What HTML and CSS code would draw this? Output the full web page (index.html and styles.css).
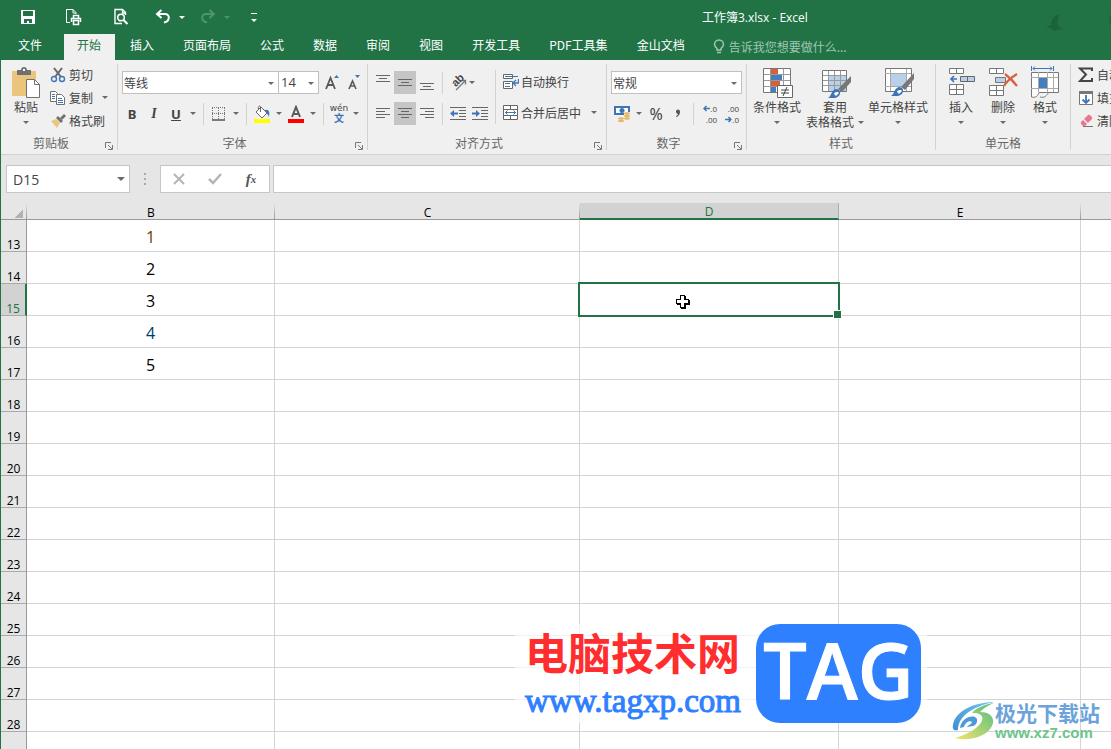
FILE: index.html
```
<!DOCTYPE html>
<html lang="zh-CN">
<head>
    <meta charset="UTF-8">
    <meta name="viewport" content="width=device-width, initial-scale=1.0">
    <title>工作簿3.xlsx - Excel</title>
    <link rel="stylesheet" href="styles.css">
</head>
<body>
    <header class="titlebar">
        <div class="quick">
            <button class="quick-btn" aria-label="保存"><svg width="16" height="16" viewBox="0 0 16 16"><path d="M1 1h14v14H1z" fill="#fff"/><path d="M3 2h10v5H3zM4 10h8v4H9v-2H7v2H4z" fill="#217346"/></svg></button>
            <button class="quick-btn print" aria-label="快速打印"><svg width="18" height="18" viewBox="0 0 18 18" fill="none" stroke="#fff"><path d="M5 14.500H1.500V1.500H8l3 3V6M8 1.500V5h3"/><path d="M8.500 10V7.500h5V10M6.500 14V10.500h9V14M8.500 12.500h5v4h-5z" stroke-width="1.500"/></svg></button>
            <button class="quick-btn preview" aria-label="打印预览"><svg width="16" height="18" viewBox="0 0 16 18" fill="none" stroke="#fff"><path d="M12.500 7V4.500l-3-3H2v14h7M9.500 1.500V5h3" stroke-width="1.400"/><circle cx="8" cy="9.500" r="3.300" stroke-width="1.600"/><path d="M10.500 12l4 4" stroke-width="2.200"/></svg></button>
            <button class="quick-btn undo" aria-label="撤消"><svg width="16" height="16" viewBox="0 0 16 16" fill="none" stroke="#fff" stroke-width="2"><path d="M6.500 1L2 5l4.500 4M2.500 5H10c5 0 5.500 7-1 8.500"/></svg></button>
            <span class="caret white"></span>
            <button class="quick-btn redo" aria-label="恢复" disabled><svg width="16" height="16" viewBox="0 0 16 16" fill="none" stroke="#4f9470" stroke-width="2"><path d="M9.500 1L14 5l-4.500 4M13.500 5H6c-5 0-5.500 7 1 8.500"/></svg></button>
            <span class="caret faded"></span>
            <button class="quick-btn custom" aria-label="自定义快速访问工具栏"><span class="caret white"></span></button>
        </div>
        <h1>工作簿3.xlsx - Excel</h1>
        <svg class="bird" width="66" height="20" viewBox="0 0 66 20" fill="#1b633a"><path d="M14 1C8 3 6 8 6 12L1 14l4 1 4 3 4-1 5-1-5-3c-1-4 0-8 1-12z"/><path d="M63 1l3 3v6l-2 3 1-6z"/></svg>
    </header>

    <nav class="tabs">
        <a class="file" href="#">文件</a>
        <a class="active" href="#">开始</a>
        <a href="#">插入</a>
        <a href="#">页面布局</a>
        <a href="#">公式</a>
        <a href="#">数据</a>
        <a href="#">审阅</a>
        <a href="#">视图</a>
        <a href="#">开发工具</a>
        <a href="#">PDF工具集</a>
        <a href="#">金山文档</a>
        <a class="tell" href="#"><svg width="12" height="16" viewBox="0 0 12 16" fill="none" stroke="#a0c6b1" stroke-width="1.500"><path d="M4 11V9.500C2.500 8 1.500 7 1.500 5.500a4.500 4.500 0 0 1 9 0C10.500 7 9.500 8 8 9.500V11zM4 13.500h4"/></svg>告诉我您想要做什么...</a>
    </nav>

    <main class="workbook">
        <section class="ribbon">
            <div class="group">
                <div class="body clip-body">
                    <button class="big paste">
                        <svg width="30" height="32" viewBox="0 0 30 32"><path d="M1 5h24v25H1z" fill="#ecc57c"/><path d="M6 4h4c0-4 6-4 6 0h4v5H6z" fill="#707070"/><path d="M12 3h2v2h-2z" fill="#fff"/><path d="M15.500 13.500h8l5 5v13h-13z" fill="#fff" stroke="#707070"/><path d="M23.500 13.500v5h5" fill="none" stroke="#707070"/></svg>
                        <span>粘贴</span><i class="caret"></i>
                    </button>
                    <div class="stack">
                        <button class="text-tool"><svg width="16" height="16" viewBox="0 0 16 16" fill="none"><path d="M4 1l7 9M12 1L5 10" stroke="#666" stroke-width="2"/><circle cx="4" cy="12" r="2.500" stroke="#3e76b5" stroke-width="1.400"/><circle cx="12" cy="12" r="2.500" stroke="#3e76b5" stroke-width="1.400"/></svg>剪切</button>
                        <button class="text-tool"><svg width="16" height="16" viewBox="0 0 16 16" fill="#fff" stroke="#707070"><path d="M.5 1.500h5l2 2v8h-7z"/><path d="M6.500 4.500h5l3 3v7h-8z"/><path d="M2 4.500h3M2 6.500h3M2 8.500h3M8 8.500h4M8 10.500h5M8 12.500h5" stroke="#3e76b5"/></svg>复制<i class="caret after"></i></button>
                        <button class="text-tool"><svg width="16" height="16" viewBox="0 0 16 16"><path d="M1 8l5-2 4 4-3 5z" fill="#ecc57c"/><path d="M6 5l2-2 5 5-2 2z" fill="#707070"/><path d="M10 5l4-4 2 2-4 4z" fill="#707070"/></svg>格式刷</button>
                    </div>
                </div>
                <h2>剪贴板</h2>
                <button class="launcher" aria-label="剪贴板设置"><svg width="8" height="8" viewBox="0 0 8 8" fill="none" stroke="#777"><path d="M.5 6V.5H6M3 3l4 4M7.500 3v4.500H3"/></svg></button>
            </div>

            <div class="group">
                <div class="body rows font-rows">
                    <div class="row">
                        <span class="combo font-name"><select aria-label="字体"><option>等线</option></select></span>
                        <span class="combo font-size"><select aria-label="字号"><option>14</option></select></span>
                        <button class="tool" aria-label="增大字号"><svg width="16" height="18" viewBox="0 0 16 18"><path d="M2 15L6.500 4 11 15M3.500 11h6" fill="none" stroke="#595959" stroke-width="1.800"/><path d="M10 4l2.500-3L15 4z" fill="#3e76b5"/></svg></button>
                        <button class="tool" aria-label="减小字号"><svg width="16" height="18" viewBox="0 0 16 18"><path d="M3 15l3.500-8 3.500 8M4 12h5" fill="none" stroke="#595959" stroke-width="1.600"/><path d="M9 1h5l-2.500 3z" fill="#3e76b5"/></svg></button>
                    </div>
                    <div class="row">
                        <button class="tool bold">B</button>
                        <button class="tool italic">I</button>
                        <button class="tool under">U</button>
                        <button class="drop" aria-label="下划线"><i class="caret"></i></button>
                        <span class="sep"></span>
                        <button class="tool" aria-label="边框"><svg width="16" height="16" viewBox="0 0 16 16" fill="none" stroke="#777"><path d="M1 1.500h13M1 7.500h13M1.500 2v11M7.500 2v11M13.500 2v11" stroke-dasharray="1 1"/><path d="M1 14h13" stroke="#555" stroke-width="1.500"/></svg></button>
                        <button class="drop" aria-label="边框选项"><i class="caret"></i></button>
                        <span class="sep"></span>
                        <button class="tool" aria-label="填充颜色"><svg width="18" height="18" viewBox="0 0 18 18"><path d="M3 7l5-5 6 6-5 5z" fill="#fff" stroke="#666"/><path d="M7.500 7V2c0-2-3-1-2 2" fill="none" stroke="#666"/><path d="M12 5c4-1 5 2 4 7-1-3-2-3-3-4z" fill="#3e76b5"/><path d="M1 14h16v4H1z" fill="#ff0"/></svg></button>
                        <button class="drop" aria-label="填充颜色选项"><i class="caret"></i></button>
                        <button class="tool" aria-label="字体颜色"><svg width="18" height="18" viewBox="0 0 18 18"><path d="M5 12l4-10 4 10M6.500 9h5" fill="none" stroke="#595959" stroke-width="2"/><path d="M1 14h16v4H1z" fill="red"/></svg></button>
                        <button class="drop" aria-label="字体颜色选项"><i class="caret"></i></button>
                        <span class="sep"></span>
                        <button class="tool phonetic" aria-label="拼音"><span>wén</span><b>文</b></button>
                        <button class="drop" aria-label="拼音选项"><i class="caret"></i></button>
                    </div>
                </div>
                <h2>字体</h2>
                <button class="launcher" aria-label="字体设置"><svg width="8" height="8" viewBox="0 0 8 8" fill="none" stroke="#777"><path d="M.5 6V.5H6M3 3l4 4M7.500 3v4.500H3"/></svg></button>
            </div>

            <div class="group">
                <div class="body align-body">
                    <div class="rows">
                        <div class="row">
                            <button class="tool" aria-label="顶端对齐"><svg width="14" height="18" viewBox="0 0 14 18" stroke="#666"><path d="M0 1.500h14M3 4.500h8M0 7.500h14"/></svg></button>
                            <button class="tool on" aria-label="垂直居中"><svg width="14" height="18" viewBox="0 0 14 18" stroke="#666"><path d="M0 5.500h14M3 8.500h8M0 11.500h14"/></svg></button>
                            <button class="tool" aria-label="底端对齐"><svg width="14" height="18" viewBox="0 0 14 18" stroke="#666"><path d="M0 9.500h14M3 12.500h8M0 15.500h14"/></svg></button>
                            <span class="sep"></span>
                            <button class="tool orient" aria-label="方向"><span>ab</span><svg width="18" height="18" viewBox="0 0 18 18" fill="none" stroke="#777" stroke-width="1.300"><path d="M7 16L16 7M12.500 6.500h4v4"/></svg></button>
                            <button class="drop tight" aria-label="方向选项"><i class="caret"></i></button>
                        </div>
                        <div class="row">
                            <button class="tool" aria-label="左对齐"><svg width="14" height="14" viewBox="0 0 14 14" stroke="#666"><path d="M0 1.500h14M0 4.500h9M0 7.500h14M0 10.500h9"/></svg></button>
                            <button class="tool on" aria-label="居中"><svg width="14" height="14" viewBox="0 0 14 14" stroke="#666"><path d="M0 1.500h14M3 4.500h8M0 7.500h14M3 10.500h8"/></svg></button>
                            <button class="tool" aria-label="右对齐"><svg width="14" height="14" viewBox="0 0 14 14" stroke="#666"><path d="M0 1.500h14M5 4.500h9M0 7.500h14M5 10.500h9"/></svg></button>
                            <span class="sep"></span>
                            <button class="tool" aria-label="减少缩进"><svg width="16" height="14" viewBox="0 0 16 14"><path d="M0 .5h16M9 3.500h7M9 6.500h7M9 9.500h7M0 12.500h16" stroke="#666"/><path d="M0 6.500L4 3v2.500h4v2H4V10z" fill="#3e76b5"/></svg></button>
                            <button class="tool" aria-label="增加缩进"><svg width="16" height="14" viewBox="0 0 16 14"><path d="M0 .5h16M9 3.500h7M9 6.500h7M9 9.500h7M0 12.500h16" stroke="#666"/><path d="M8 6.500L4 3v2.500H0v2h4V10z" fill="#3e76b5"/></svg></button>
                        </div>
                    </div>
                    <span class="sep long"></span>
                    <div class="rows">
                        <button class="text-tool wrap"><svg width="16" height="16" viewBox="0 0 16 16" fill="#fff" stroke="#666"><path d="M.5.5h9v4h-9zM.5 7.500h9v7h-9z"/><path d="M2 2.500h13M2 9.500h5M2 12.500h5" stroke="#3e76b5"/><path d="M15.500 5v4h-5M13 6l-3 3 3 3" fill="none" stroke="#3e76b5" stroke-width="1.300"/></svg>自动换行</button>
                        <button class="text-tool wrap"><svg width="16" height="16" viewBox="0 0 16 16" fill="#fff" stroke="#666"><path d="M.5.5h14v14H.5zM.5 4.500h14M.5 10.500h14M7.500.5v4M7.500 10.500v4"/><path d="M2 7.500h11M4.500 5.500l-2 2 2 2M10.500 5.500l2 2-2 2" fill="none" stroke="#3e76b5"/></svg>合并后居中<i class="caret after"></i></button>
                    </div>
                </div>
                <h2>对齐方式</h2>
                <button class="launcher" aria-label="对齐设置"><svg width="8" height="8" viewBox="0 0 8 8" fill="none" stroke="#777"><path d="M.5 6V.5H6M3 3l4 4M7.500 3v4.500H3"/></svg></button>
            </div>

            <div class="group">
                <div class="body rows number-rows">
                    <div class="row">
                        <span class="combo number-format"><select aria-label="数字格式"><option>常规</option></select></span>
                    </div>
                    <div class="row">
                        <button class="tool" aria-label="会计数字格式"><svg width="18" height="18" viewBox="0 0 18 18"><path d="M1 1h16v9H1z" fill="#3e76b5"/><path d="M3 3h12v5H3z" fill="#fff"/><circle cx="9" cy="5.500" r="2.500" fill="#3e76b5"/><path d="M11 7h6v8h-6zM5 11h6v6H5z" fill="#f0f0f0"/><g fill="#e8b765"><ellipse cx="14" cy="8.500" rx="3" ry="1.200"/><ellipse cx="14" cy="11" rx="3" ry="1.200"/><ellipse cx="14" cy="13.500" rx="3" ry="1.200"/><ellipse cx="8" cy="13.500" rx="3" ry="1.200"/><ellipse cx="8" cy="16" rx="3" ry="1.200"/></g></svg></button>
                        <button class="drop" aria-label="会计格式选项"><i class="caret"></i></button>
                        <button class="tool percent">%</button>
                        <button class="tool" aria-label="千位分隔样式"><svg width="8" height="12" viewBox="0 0 8 12"><path d="M2 3.500C2 1 6 .5 6 4c0 2.500-1.500 4-3.500 5l-.5-1C3.500 7.500 4 6.500 4 6 3 6 2 5 2 3.500z" fill="#555"/></svg></button>
                        <span class="sep"></span>
                        <button class="tool decimal" aria-label="增加小数位数"><span><svg width="7" height="10" viewBox="0 0 7 10" fill="none" stroke="#3e76b5" stroke-width="1.500"><path d="M7 5.500H1M3.500 3L1 5.500 3.500 8"/></svg>.0</span><span>.00</span></button>
                        <button class="tool decimal" aria-label="减少小数位数"><span>.00</span><span><svg width="7" height="10" viewBox="0 0 7 10" fill="none" stroke="#3e76b5" stroke-width="1.500"><path d="M0 5.500h6M3.500 3L6 5.500 3.500 8"/></svg>.0</span></button>
                    </div>
                </div>
                <h2>数字</h2>
                <button class="launcher" aria-label="数字设置"><svg width="8" height="8" viewBox="0 0 8 8" fill="none" stroke="#777"><path d="M.5 6V.5H6M3 3l4 4M7.500 3v4.500H3"/></svg></button>
            </div>

            <div class="group plain">
                <div class="body styles-body">
                    <button class="big conditional">
                        <svg width="32" height="32" viewBox="0 0 32 32"><path d="M2.500 2.500h27v24h-27z" fill="#fff" stroke="#777"/><path d="M10 3h7v5h-7zM10 15h9v5h-9z" fill="#d8613c"/><path d="M10 9h11v5H10zM10 21h5v5h-5z" fill="#437fbc"/><path d="M3 8.500h26M3 14.500h26M3 20.500h26M9.500 3v23M22.500 3v23" stroke="#999" fill="none"/><path d="M16.500 19.500h15v12h-15z" fill="#fff" stroke="#666"/><path d="M20 24h8M20 27h8M26 21l-4 9" stroke="#444" fill="none"/></svg>
                        <span>条件格式</span><i class="caret"></i>
                    </button>
                    <button class="big table-style">
                        <svg width="32" height="32" viewBox="0 0 32 32"><path d="M3.500 4.500h24v21h-24z" fill="#fff" stroke="#777"/><path d="M10 10h17v15H10z" fill="#b9d0e9"/><path d="M4 9.500h23M4 14.500h23M4 19.500h23M9.500 5v20M15.500 5v20M21.500 5v20" stroke="#999"/><path d="M32 10v6L23 26l-4-3z" fill="#777"/><path d="M9 32c4-2 3-9 9-9 5 1 4 8-2 9z" fill="#3e76b5"/><path d="M15 28c0-2 4-3 5-1l-3 3z" fill="#fff"/></svg>
                        <span>套用</span><span>表格格式<i class="caret"></i></span>
                    </button>
                    <button class="big cell-style">
                        <svg width="32" height="32" viewBox="0 0 32 32"><path d="M3.500 2.500h26v23h-26z" fill="#fff" stroke="#777"/><path d="M3 7.500h26M3 20.500h26M8.500 3v22M24.500 3v22" stroke="#aaa"/><path d="M9 8h15v12H9z" fill="#b9d0e9"/><path d="M32 7v6l-9 11-4-3z" fill="#777"/><path d="M9 30c4-2 3-9 9-9 5 1 4 8-2 9z" fill="#3e76b5"/><path d="M15 26c0-2 4-3 5-1l-3 3z" fill="#fff"/></svg>
                        <span>单元格样式</span><i class="caret"></i>
                    </button>
                </div>
                <h2>样式</h2>
            </div>

            <div class="group plain">
                <div class="body cells-body">
                    <button class="big">
                        <svg width="30" height="32" viewBox="0 0 30 32"><path d="M3.500 2.500h14v5h-14zM10.500 2.500v5M3.500 18.500h14v10h-14zM3.500 23.500h14M10.500 18.500v10" fill="#fff" stroke="#777"/><path d="M14.500 10.500h14v5h-14zM21.500 10.500v5" fill="#b9d0e9" stroke="#666"/><path d="M11 13H5M8 10l-3 3 3 3" fill="none" stroke="#3e76b5" stroke-width="1.700"/></svg>
                        <span>插入</span><i class="caret"></i>
                    </button>
                    <button class="big">
                        <svg width="30" height="32" viewBox="0 0 30 32"><path d="M1.500 2.500h14v5h-14zM8.500 2.500v5M1.500 19.500h14v10h-14zM1.500 24.500h14M8.500 19.500v10" fill="#fff" stroke="#777"/><path d="M7.500 11.500h10v5h-10z" fill="#b9d0e9" stroke="#777"/><path d="M17 8c4 3 9 8 12 12M29 8c-5 3-10 7-13 12" fill="none" stroke="#d8613c" stroke-width="2.200"/></svg>
                        <span>删除</span><i class="caret"></i>
                    </button>
                    <button class="big">
                        <svg width="30" height="32" viewBox="0 0 30 32"><path d="M1.500 6.500h27v20h-27z" fill="#fff" stroke="#777"/><path d="M1 11.500h27M1 22.500h27M8.500 6v20M17.500 6v20M23.500 6v20" stroke="#aaa"/><path d="M9 12h8v10H9z" fill="#437fbc"/><path d="M1.500 0v5M23.500 0v5M3 2.500h19M5 .5l-2 2 2 2M20 .5l2 2-2 2" fill="none" stroke="#3e76b5"/><path d="M1.500 26v5c5 1 6-1 8-5M10 31c5 1 6-1 9-5" fill="#fff" stroke="#777"/></svg>
                        <span>格式</span><i class="caret"></i>
                    </button>
                </div>
                <h2>单元格</h2>
            </div>

            <div class="group plain edit">
                <div class="body">
                    <div class="stack">
                        <button class="text-tool"><svg width="16" height="16" viewBox="0 0 16 16"><path d="M14 4V1.500H2l6 6-6 6.500h12V11" fill="none" stroke="#444" stroke-width="2"/></svg>自动求和</button>
                        <button class="text-tool"><svg width="16" height="16" viewBox="0 0 16 16"><path d="M1.500 1.500h13v13h-13z" fill="#fff" stroke="#777"/><path d="M1 1h14v3H1z" fill="#777"/><path d="M8 5v8M4.500 9.500L8 13l3.500-3.500" fill="none" stroke="#3e76b5" stroke-width="1.800"/></svg>填充</button>
                        <button class="text-tool"><svg width="16" height="16" viewBox="0 0 16 16"><path d="M6 6l4-4c1-1 5 2 4 4l-4 4z" fill="#e8788f"/><path d="M5 7l4 4-2 2c-2 1-5-2-4-4z" fill="#e8788f"/><path d="M5 13.500h10" stroke="#777"/></svg>清除</button>
                    </div>
                </div>
            </div>
        </section>

        <section class="formula-bar">
            <span class="combo name-box"><input type="text" value="D15" aria-label="名称框"></span>
            <span class="dots"><i></i><i></i><i></i></span>
            <div class="formula-btns">
                <button aria-label="取消"><svg width="14" height="14" viewBox="0 0 14 14" stroke="#b5b5b5" stroke-width="2"><path d="M2 2l10 10M12 2L2 12"/></svg></button>
                <button aria-label="输入"><svg width="14" height="14" viewBox="0 0 14 14" fill="none" stroke="#b5b5b5" stroke-width="2.500"><path d="M1 7l4 4 8-9"/></svg></button>
                <button class="fx" aria-label="插入函数">f<sub>x</sub></button>
            </div>
            <input class="formula" type="text" aria-label="编辑栏">
        </section>

        <div class="sheet">
            <table>
                <colgroup><col class="col-head"><col class="col-b"><col class="col-c"><col class="col-d"><col class="col-e"><col></colgroup>
                <thead>
                    <tr><th class="corner"></th><th>B</th><th>C</th><th class="current">D</th><th>E</th><th></th></tr>
                </thead>
                <tbody>
                    <tr><th>13</th><td class="orange">1</td><td></td><td></td><td></td><td></td></tr>
                    <tr><th>14</th><td>2</td><td></td><td></td><td></td><td></td></tr>
                    <tr><th class="current">15</th><td>3</td><td></td><td class="selected"><div class="selection"></div><svg class="pointer" width="16" height="16" viewBox="0 0 16 16" shape-rendering="crispEdges"><path d="M6 2h5v4h4v5h-4v4H6v-4H2V6h4z" fill="#000"/><path d="M5.500 1.500h4v4h4v4h-4v4h-4v-4h-4v-4h4z" fill="#fff" stroke="#000"/></svg></td><td></td><td></td></tr>
                    <tr><th>16</th><td class="blue">4</td><td></td><td></td><td></td><td></td></tr>
                    <tr><th>17</th><td>5</td><td></td><td></td><td></td><td></td></tr>
                    <tr><th>18</th><td></td><td></td><td></td><td></td><td></td></tr>
                    <tr><th>19</th><td></td><td></td><td></td><td></td><td></td></tr>
                    <tr><th>20</th><td></td><td></td><td></td><td></td><td></td></tr>
                    <tr><th>21</th><td></td><td></td><td></td><td></td><td></td></tr>
                    <tr><th>22</th><td></td><td></td><td></td><td></td><td></td></tr>
                    <tr><th>23</th><td></td><td></td><td></td><td></td><td></td></tr>
                    <tr><th>24</th><td></td><td></td><td></td><td></td><td></td></tr>
                    <tr><th>25</th><td></td><td></td><td></td><td></td><td></td></tr>
                    <tr><th>26</th><td></td><td></td><td></td><td></td><td></td></tr>
                    <tr><th>27</th><td></td><td></td><td></td><td></td><td></td></tr>
                    <tr><th>28</th><td></td><td></td><td></td><td></td><td></td></tr>
                    <tr><th></th><td></td><td></td><td></td><td></td><td></td></tr>
                </tbody>
            </table>
        </div>
    </main>

    <div class="mark-tag">
        <div class="mark-text"><strong>电脑技术网</strong><span>www.tagxp.com</span></div>
        <div class="mark-logo">TAG</div>
    </div>

    <div class="mark-site">
        <svg width="44" height="42" viewBox="0 0 44 42">
            <defs>
                <linearGradient id="blue" x1="0" y1="1" x2="1" y2="0"><stop offset="0" stop-color="#3f8fd0"/><stop offset="1" stop-color="#74c5f3"/></linearGradient>
                <linearGradient id="green" x1="0" y1="1" x2="1" y2="0"><stop offset="0" stop-color="#f2e66b"/><stop offset="1" stop-color="#4fbd80"/></linearGradient>
            </defs>
            <path d="M43 1C24 1 4 10 2 24c-1 4 1 6 5 5C7 16 20 6 43 1z" fill="url(#blue)"/>
            <path d="M9 27c1-8 9-13 15-11 4 2 2 8-2 9l-6 1c1-2 5-3 5-5-3-2-7 1-8 5z" fill="#4c9bd8"/>
            <path d="M43 2C31 4 24 8 21 12c10-1 13 5 8 11-6 7-15 11-25 14 15 4 32-2 37-12 4-9-3-14-12-14 4-4 8-7 14-9z" fill="url(#green)"/>
        </svg>
        <div><strong>极光下载站</strong><span>www.xz7.com</span></div>
    </div>
</body>
</html>
```
FILE: styles.css
```
* {
    box-sizing: border-box;
}

body {
    margin: 0;
    height: 100vh;
    display: flex;
    flex-direction: column;
    overflow: hidden;
    position: relative;
    background: #217346;
    font-family: "Noto Sans CJK SC", sans-serif;
    font-size: 12px;
    line-height: 15px;
    color: #444;
}

button,
input,
select {
    font: inherit;
    color: inherit;
    margin: 0;
    padding: 0;
    border: 0;
    background: none;
    appearance: none;
    outline: none;
}

svg {
    display: block;
    flex: none;
}

.caret {
    display: inline-block;
    flex: none;
    border: 3px solid transparent;
    border-top-color: #6a6a6a;
    border-bottom: 0;
}

/* title bar */
.titlebar {
    height: 34px;
    display: grid;
    grid-template-columns: 702px 1fr auto;
    align-items: center;
    color: #fff;
}

.titlebar h1 {
    margin: 0;
    font-family: "Open Sans", "Noto Sans CJK SC", sans-serif;
    font-size: 12px;
    font-weight: 400;
}

.quick {
    display: flex;
    align-items: center;
    padding-left: 20px;
}

.quick .print { margin-left: 29px; }
.quick .preview { margin-left: 30px; }
.quick .undo { margin-left: 26px; margin-right: 8px; }
.quick .redo { margin-left: 15px; margin-right: 8px; }
.quick .custom {
    margin-left: 21px;
    padding-top: 3px;
    border-top: 1px solid #fff;
    line-height: 0;
}
.caret.white { border-top-color: #fff; }
.caret.faded { border-top-color: #4f9470; }

.bird {
    margin-top: 12px;
}

/* tabs */
.tabs {
    height: 26px;
    display: flex;
    gap: 1px;
    flex: none;
    white-space: nowrap;
}

.tabs a {
    padding: 0 14px;
    line-height: 22px;
    color: #fff;
    text-decoration: none;
}

.tabs .file {
    padding: 0 18px;
    margin-right: 3px;
}

.tabs .active {
    padding-left: 13px;
    background: #f0f0f0;
    color: #217346;
}

.tabs .tell {
    display: flex;
    align-items: center;
    gap: 4px;
    padding-left: 13px;
    color: #a0c6b1;
}

.workbook {
    flex: 1;
    min-height: 0;
    display: flex;
    flex-direction: column;
    border-left: 1px solid #217346;
    background: #e6e6e6;
}

/* ribbon */
.ribbon {
    display: flex;
    flex: none;
    padding: 4px 0;
    overflow: hidden;
    background: #f0f0f0;
    border-bottom: 1px solid #d2d2d2;
    white-space: nowrap;
}

.group {
    position: relative;
    flex: none;
    height: 86px;
    border-right: 1px solid #d2d2d2;
}

.group.edit { border: 0; }

.group h2 {
    margin: 0;
    padding-right: 16px;
    font-size: 12px;
    font-weight: 400;
    line-height: 14px;
    text-align: center;
    color: #666;
}

.group.plain h2 { padding-right: 0; }

.body {
    display: flex;
    height: 72px;
    padding: 0 4px;
}

.launcher {
    position: absolute;
    right: 4px;
    bottom: 0;
}

.rows {
    display: flex;
    flex-direction: column;
    gap: 8px;
    padding-top: 7px;
}

.clip-body { padding-right: 6px; }
.font-rows { padding-left: 3px; padding-right: 2px; }
.number-rows { padding-left: 4px; }
.align-body { padding-right: 6px; }

.row {
    display: flex;
    align-items: center;
    height: 23px;
}

.tool,
.drop {
    display: flex;
    align-items: center;
    justify-content: center;
    width: 22px;
    height: 23px;
}

.drop { width: 12px; }
.drop.tight { width: 6px; }

.tool.on { background: #c5c5c5; }

.tool.bold {
    font: bold 13px "Noto Sans", sans-serif;
}

.tool.italic {
    font: italic bold 14px "Liberation Serif", serif;
}

.tool.under {
    font: bold 13px "Noto Sans", sans-serif;
    text-decoration: underline;
}

.tool.percent {
    font: 16px "Noto Sans", sans-serif;
}

.tool.phonetic {
    flex-direction: column;
    font: 9px/10px "DejaVu Sans", "Noto Sans CJK SC", sans-serif;
}

.phonetic b {
    font-size: 10px;
    line-height: 12px;
    color: #3e76b5;
}

/* slanted "ab" lying over the arrow */
.tool.orient { position: relative; }

.orient span {
    position: absolute;
    left: 4px;
    top: 3px;
    font: bold 11px/12px "Liberation Sans", sans-serif;
    transform: rotate(-45deg);
}

.tool.decimal {
    flex-direction: column;
    align-items: flex-end;
    padding-right: 3px;
    font: 8px/11px "Open Sans", sans-serif;
}

.decimal span {
    display: flex;
}

.sep {
    width: 1px;
    height: 22px;
    margin: 0 4px;
    background: #d2d2d2;
}

.sep.long {
    height: 54px;
    margin-top: 6px;
}

.combo {
    position: relative;
    display: flex;
    height: 23px;
    border: 1px solid #c0c0c0;
    background: #fff;
}

.combo::after {
    content: "";
    position: absolute;
    right: 4px;
    top: 10px;
    border: 3px solid transparent;
    border-top-color: #6a6a6a;
    border-bottom: 0;
}

.combo select,
.combo input {
    width: 100%;
    padding-left: 1px;
}

.font-name {
    width: 157px;
    margin-left: 1px;
}

.font-size {
    width: 41px;
    margin-left: -1px;
    margin-right: 2px;
}

.font-size select {
    padding-left: 2px;
    font-family: "Open Sans", sans-serif;
    font-size: 13px;
}

.number-format { width: 131px; }

.stack {
    display: flex;
    flex-direction: column;
}

.text-tool {
    display: flex;
    align-items: center;
    gap: 3px;
    height: 23px;
    padding: 0 3px 2px;
}

.text-tool.wrap { gap: 2px; }

.caret.after { margin-left: 6px; }
.wrap .caret.after { margin-left: 8px; }

.big {
    display: flex;
    flex-direction: column;
    align-items: center;
    width: 42px;
    padding-top: 2px;
}

.big svg { margin-bottom: 1px; }
.big > .caret { margin-top: 7px; }
.big span .caret { margin: 0 0 3px 4px; }
.big.conditional { width: 56px; }
.big.table-style { width: 60px; }
.big.cell-style { width: 66px; }

.styles-body { padding-left: 2px; }
.cells-body { padding-left: 4px; }

/* formula bar */
.formula-bar {
    display: flex;
    flex: none;
    height: 48px;
    padding: 10px 0 10px 5px;
}

.name-box {
    width: 124px;
    height: 28px;
    border-color: #c6c6c6;
}

.name-box input {
    padding-left: 6px;
    font-family: "Open Sans", sans-serif;
    font-size: 14px;
}

.name-box::after {
    top: 11px;
    border-width: 4px 4px 0;
}

.dots {
    display: flex;
    flex-direction: column;
    justify-content: center;
    align-items: center;
    gap: 3px;
    width: 30px;
}

.dots i {
    width: 2px;
    height: 2px;
    background: #aaa;
}

.formula-btns {
    display: flex;
    width: 110px;
    margin-right: 3px;
    border: 1px solid #c6c6c6;
    background: #fff;
}

.formula-btns button {
    flex: 1;
    display: flex;
    align-items: center;
    justify-content: center;
}

.formula-btns .fx {
    font: italic bold 15px "Liberation Serif", serif;
    color: #555;
}

.fx sub { font-size: 11px; }

.formula {
    flex: 1;
    min-width: 0;
    border: 1px solid #c6c6c6;
    border-right: 0;
    background: #fff;
}

/* sheet */
.sheet {
    flex: 1;
    min-height: 0;
    overflow: hidden;
    background: #fff;
}

table {
    width: 100%;
    table-layout: fixed;
    border-collapse: separate;
    border-spacing: 0;
    font-family: "Open Sans", "Noto Sans CJK SC", sans-serif;
    color: #000;
}

.col-head { width: 26px; }
.col-b { width: 248px; }
.col-c { width: 305px; }
.col-d { width: 259px; }
.col-e { width: 242px; }

th,
td {
    padding: 0;
    text-align: center;
    font-weight: 400;
}

thead th {
    height: 17px;
    padding-top: 3px;
    background: linear-gradient(#e6e6e6, #999) right / 1px 100% no-repeat #e6e6e6;
    border-bottom: 1px solid #999;
    line-height: 13px;
}

thead .current {
    background: #d2d2d2;
    border-bottom: 2px solid #217346;
    border-right: 1px solid #ababab;
    line-height: 12px;
    color: #217346;
}

thead .corner::before {
    content: "";
    display: block;
    width: 9px;
    height: 9px;
    margin: 1px 0 0 13px;
    background: linear-gradient(135deg, transparent 50%, #b1b1b1 50%);
}

thead th:last-child { background: #e6e6e6; }

tbody tr { height: 32px; }

tbody th {
    vertical-align: bottom;
    background: #e6e6e6;
    border-right: 1px solid #999;
    border-bottom: 1px solid #ababab;
    font-size: 12px;
    line-height: 12px;
}

tbody th.current {
    background: #d2d2d2;
    border-right: 2px solid #217346;
    color: #217346;
}

td {
    padding-top: 2px;
    border-right: 1px solid #d4d4d4;
    border-bottom: 1px solid #d4d4d4;
    font-size: 16px;
    line-height: 20px;
}

td:last-child { border-right: 0; }

td.orange { color: #6b3a00; }
td.blue { color: #003a66; }

.selected { position: relative; }

.selection {
    position: absolute;
    inset: -2px;
    border: 2px solid #217346;
}

.selection::after {
    content: "";
    position: absolute;
    right: -4px;
    bottom: -4px;
    width: 7px;
    height: 7px;
    border: 1px solid #fff;
    background: #217346;
}

.pointer {
    position: absolute;
    left: 95px;
    top: 10px;
}

/* watermarks */
.mark-tag {
    position: absolute;
    left: 515px;
    top: 624px;
    display: flex;
    height: 99px;
    padding-right: 6px;
    background: rgba(255, 255, 255, 0.7);
}

.mark-text {
    width: 241px;
    padding-left: 10px;
    display: flex;
    flex-direction: column;
    white-space: nowrap;
}

.mark-text strong {
    height: 56px;
    font-size: 43px;
    line-height: 54px;
    color: #ff2d2d;
}

.mark-text span {
    font: 33px/42px "Liberation Serif", serif;
    color: #2f80ff;
    -webkit-text-stroke: 1px #2f80ff;
}

.mark-logo {
    width: 165px;
    border-radius: 24px;
    background: #2f80ff;
    color: #fff;
    font-family: "Open Sans", sans-serif;
    font-size: 77px;
    font-weight: 600;
    line-height: 92px;
    text-align: center;
    -webkit-text-stroke: 1px #fff;
}

.mark-site {
    position: absolute;
    right: 11px;
    bottom: 6px;
    display: flex;
    align-items: center;
}

.mark-site div {
    display: flex;
    flex-direction: column;
}

.mark-site strong {
    font-size: 21px;
    line-height: 22px;
    color: #6ba3da;
}

.mark-site span {
    font: bold 15px/20px "Liberation Sans", sans-serif;
    color: #6cc58b;
}
```
